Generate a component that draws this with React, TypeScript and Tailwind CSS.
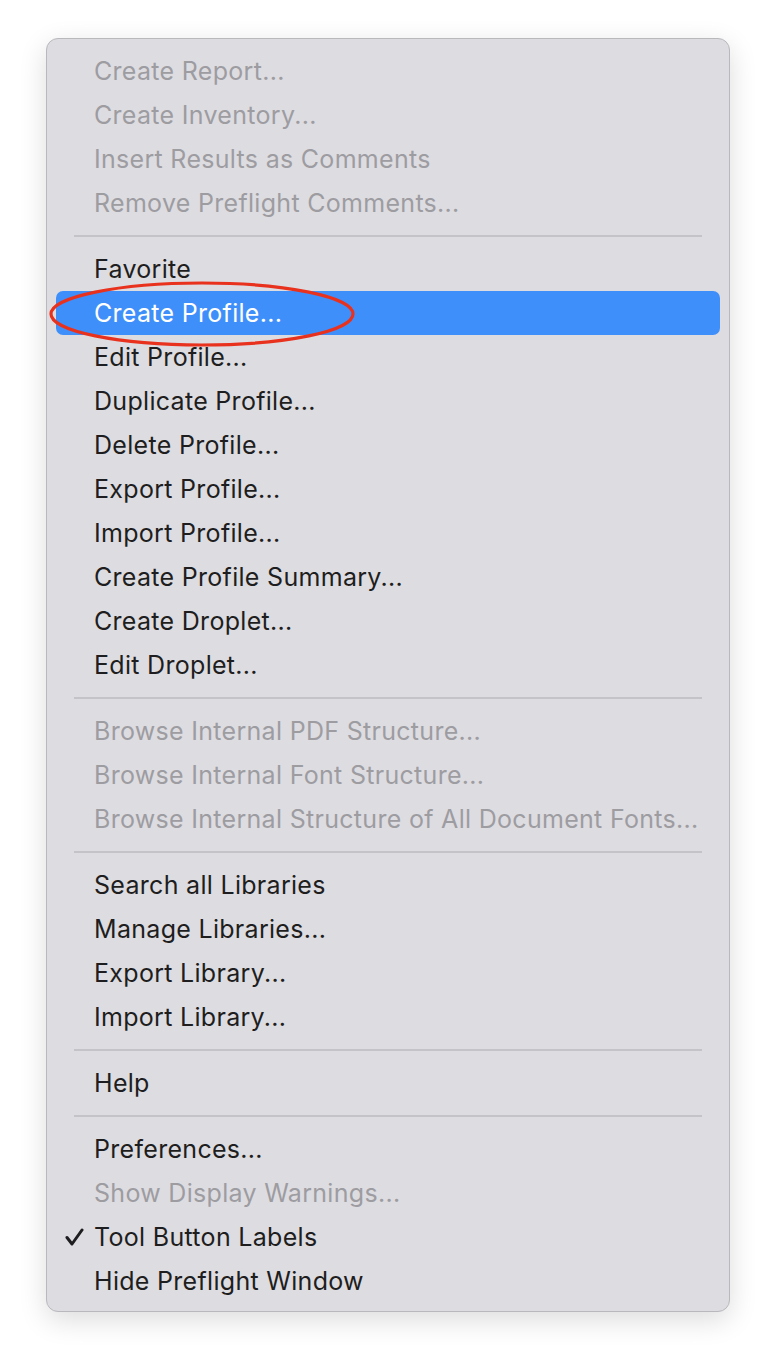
import React from 'react'

type Item = { label: string; disabled?: boolean; selected?: boolean; checked?: boolean }

const groups: Item[][] = [
  [
    { label: 'Create Report...', disabled: true },
    { label: 'Create Inventory...', disabled: true },
    { label: 'Insert Results as Comments', disabled: true },
    { label: 'Remove Preflight Comments...', disabled: true },
  ],
  [
    { label: 'Favorite' },
    { label: 'Create Profile...', selected: true },
    { label: 'Edit Profile...' },
    { label: 'Duplicate Profile...' },
    { label: 'Delete Profile...' },
    { label: 'Export Profile...' },
    { label: 'Import Profile...' },
    { label: 'Create Profile Summary...' },
    { label: 'Create Droplet...' },
    { label: 'Edit Droplet...' },
  ],
  [
    { label: 'Browse Internal PDF Structure...', disabled: true },
    { label: 'Browse Internal Font Structure...', disabled: true },
    { label: 'Browse Internal Structure of All Document Fonts...', disabled: true },
  ],
  [
    { label: 'Search all Libraries' },
    { label: 'Manage Libraries...' },
    { label: 'Export Library...' },
    { label: 'Import Library...' },
  ],
  [{ label: 'Help' }],
  [
    { label: 'Preferences...' },
    { label: 'Show Display Warnings...', disabled: true },
    { label: 'Tool Button Labels', checked: true },
    { label: 'Hide Preflight Window' },
  ],
]

const MenuRow = ({ item }: { item: Item }) => {
  const color = item.selected
    ? 'bg-[#3f8ffb] text-white rounded-[7px]'
    : item.disabled
      ? 'text-[#9d9ca1]'
      : 'text-[#1e1e20]'
  return (
    <div className={`relative mx-[9px] h-[44px] flex items-center pl-[38px] ${color}`}>
      {item.checked && (
        <svg className="absolute left-[9px] top-[13px]" width="19" height="18" viewBox="0 0 19 18">
          <path d="M2 9.5 L7 16 L17 2" fill="none" stroke="#1e1e20" strokeWidth="3" strokeLinecap="round" strokeLinejoin="round" />
        </svg>
      )}
      <span className="whitespace-nowrap">{item.label}</span>
    </div>
  )
}

export default function App() {
  return (
    <div className="w-[776px] h-[1366px] bg-white pt-[38px] pl-[46px]" style={{ fontFamily: 'Inter, "Liberation Sans", sans-serif' }}>
      <div className="relative w-[684px] h-[1274px] bg-[#dddce1] border border-[#b9b8bd] rounded-[12px] shadow-[0_8px_28px_rgba(0,0,0,0.14)] pt-[10px] text-[25px] tracking-[0.3px] leading-none">
        {groups.map((g, gi) => (
          <div key={gi}>
            {gi > 0 && (
              <div className="h-[22px] flex items-center mx-[27px]">
                <div className="w-full h-[2px] bg-[#c4c3c8]" />
              </div>
            )}
            {g.map((item) => (
              <MenuRow key={item.label} item={item} />
            ))}
          </div>
        ))}
        <svg className="absolute left-[1px] top-[242px]" width="310" height="68" viewBox="0 0 310 68">
          <ellipse cx="154" cy="33" rx="151" ry="31" fill="none" stroke="#e8321e" strokeWidth="3.2" />
        </svg>
      </div>
    </div>
  )
}
